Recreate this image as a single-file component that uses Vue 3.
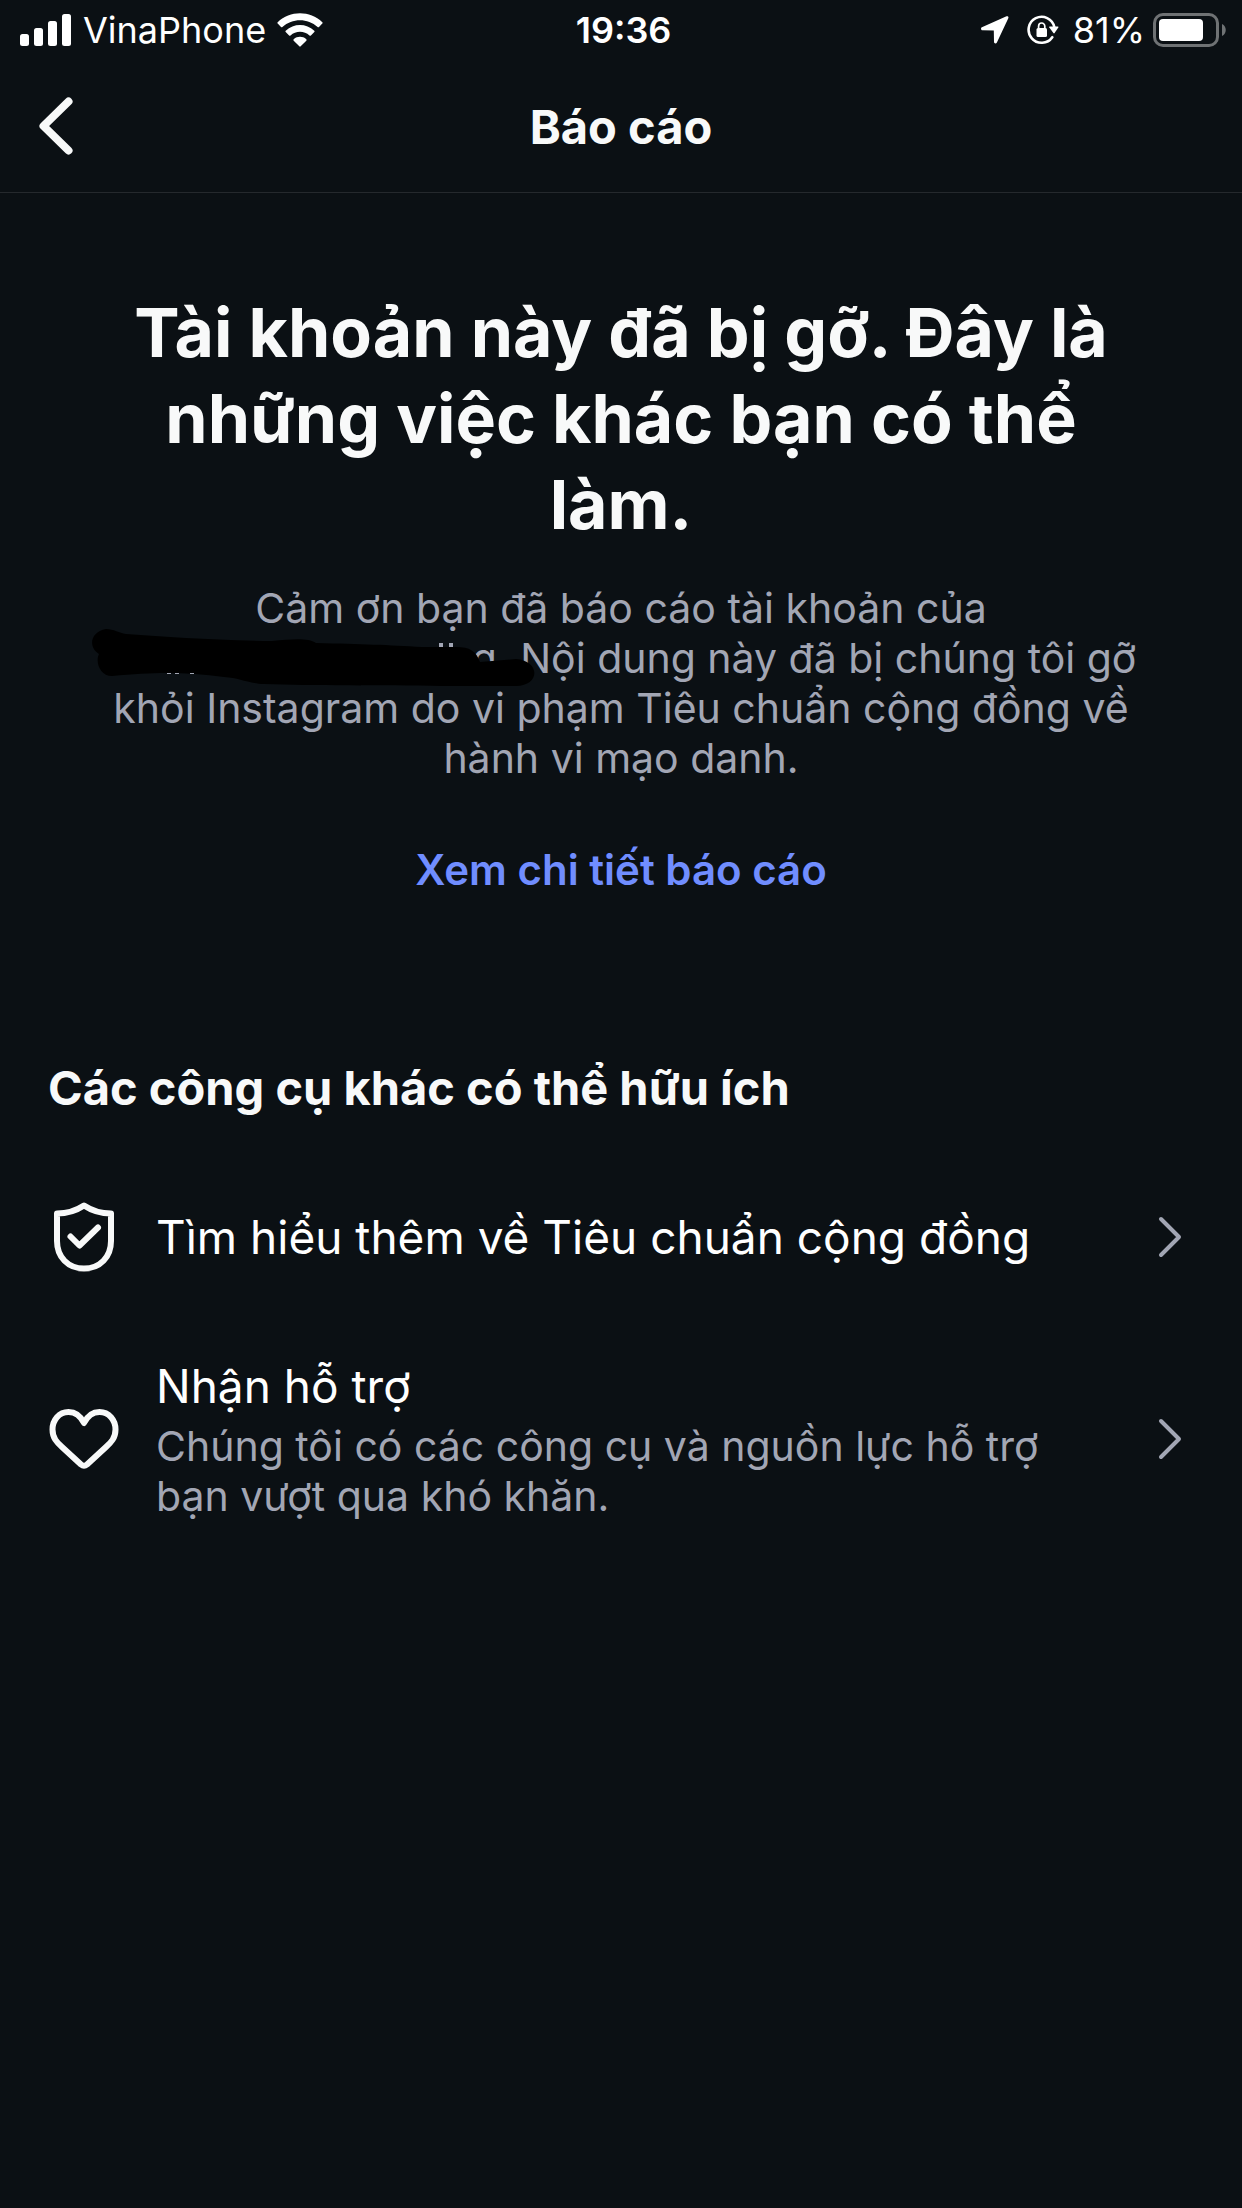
<template>
  <div class="screen">
    <div class="status-bar">
      <div class="status-left">
        <svg class="icon-signal" viewBox="0 0 52 33" aria-hidden="true">
          <rect x="0" y="20" width="9" height="12" rx="2.5" />
          <rect x="14" y="14" width="9" height="18" rx="2.5" />
          <rect x="28" y="7" width="9" height="25" rx="2.5" />
          <rect x="42" y="0" width="9" height="32" rx="2.5" />
        </svg>
        <span>VinaPhone</span>
        <svg class="icon-wifi" viewBox="0 0 46 34" aria-hidden="true">
          <path d="M.7 9.2C13 -2.6 33 -2.6 45.3 9.2q.7.7 0 1.400l-3.300 3.400q-.7.7-1.400 0C30.800 4.900 15.200 4.900 5.400 14q-.7.7-1.400 0L.7 10.600q-.7-.7 0-1.400z" />
          <path d="M8.700 17.700C16.800 10 29.200 10 37.300 17.700q.7.7 0 1.400l-3.400 3.400q-.7.7-1.400 0C27.200 17.600 18.800 17.600 13.500 22.500q-.7.7-1.400 0l-3.400-3.400q-.7-.7 0-1.400z" />
          <path d="M16.700 26.200c3.600-3.200 9-3.200 12.600 0q.8.7 0 1.500l-5.600 5.600q-.7.7-1.400 0l-5.600-5.600q-.8-.8 0-1.500z" />
        </svg>
      </div>
      <span class="clock">19:36</span>
      <div class="status-right">
        <svg class="icon-location" viewBox="0 0 28 28" aria-hidden="true">
          <path d="M25.500.3.900 11.300c-1.500.7-1 3 .6 3l11.300.2.200 11.500c0 1.600 2.200 2 2.900.5L27.300 2.200c.6-1.300-.5-2.400-1.800-1.900z" />
        </svg>
        <svg class="icon-lock" viewBox="0 0 32 30" aria-hidden="true">
          <path d="M25.300 22.200A13 13 0 1 1 27.300 12" fill="none" stroke="#fff" stroke-width="2.600" stroke-linecap="round" />
          <path d="M22.800 11.500h8q1 0 .5 1l-3.700 5.600q-.6.8-1.200 0l-4.100-5.600q-.5-1 .5-1z" />
          <rect x="9.500" y="13" width="10.500" height="9" rx="1.500" />
          <path d="M11.600 13.500v-2.200a3.100 3.300 0 0 1 6.200 0v2.200" fill="none" stroke="#fff" stroke-width="1.700" />
        </svg>
        <span>81%</span>
        <svg class="icon-battery" viewBox="0 0 74 34" aria-hidden="true">
          <rect x="1.500" y="1.500" width="63" height="31" rx="8.500" fill="none" stroke="#6f7274" stroke-width="3" />
          <rect x="6" y="6" width="44" height="22" rx="4" />
          <path d="M69 11c5 2 5 10 0 12z" fill="#6f7274" />
        </svg>
      </div>
    </div>

    <header class="nav-bar">
      <button class="back-button" type="button" aria-label="Quay lại">
        <svg viewBox="0 0 34 58" aria-hidden="true">
          <path d="M29.500 4.500 4.500 29 29.500 53.500" />
        </svg>
      </button>
      <div class="nav-title">Báo cáo</div>
    </header>

    <main>
      <section class="summary">
        <h1>Tài khoản này đã bị gỡ. Đây là những việc khác bạn có thể làm.</h1>
        <p>
          Cảm ơn bạn đã báo cáo tài khoản của
          <span class="account"><svg class="scribble" viewBox="0 0 444 58" aria-hidden="true">
              <path d="M14 0C22 0 27 4 34 5C76 8 120 11 180 12C202 10 216 9 224 14C270 15 296 16 330 18H364C378 18 384 22 388 33L424 30C449 32 448 57 424 57H350C290 56 220 57 172 55C154 54 148 49 132 48C94 43 64 43 20 47C8 47 3 33 7 25C-4 18 -2 3 14 0z" />
              <path class="trace" d="M347 14h4v4h-4zM357 14h4v4h-4zM75 44h4v1h-4zM83 44h4v1h-4zM98 44h4v1h-4z" />
            </svg></span>g. Nội dung này đã bị chúng tôi gỡ khỏi Instagram do vi phạm Tiêu chuẩn cộng đồng về hành vi mạo danh.
        </p>
        <a class="details-link" href="#">Xem chi tiết báo cáo</a>
      </section>

      <section class="tools">
        <h2>Các công cụ khác có thể hữu ích</h2>
        <a v-for="tool in tools" :key="tool.title" class="tool" href="#">
          <svg v-if="tool.icon === 'shield'" class="tool-icon" viewBox="0 0 72 72" aria-hidden="true">
            <path d="M36 4.500C28 9.800 19 12.500 9 12.500V40C9 56 20 67.500 36 67.500S63 56 63 40V12.500C53 12.500 44 9.800 36 4.500z" />
            <path d="M22.500 35.500 31.500 44.500 50 26.500" />
          </svg>
          <svg v-else class="tool-icon" viewBox="0 0 72 72" aria-hidden="true">
            <path d="M36 20C32.500 13 27 9 20.500 9C11 9 4.500 17 4.500 26.500C4.500 35 9 39.500 14 44L33 61.500Q36 64 39 61.500L58 44C63 39.500 67.500 35 67.500 26.500C67.500 17 61 9 51.500 9C45 9 39.500 13 36 20z" />
          </svg>
          <span class="tool-text">
            <span class="tool-title">{{ tool.title }}</span>
            <span v-if="tool.description" class="tool-description">{{ tool.description }}</span>
          </span>
          <svg class="chevron" viewBox="0 0 24 42" aria-hidden="true">
            <path d="M3 3 21 21 3 39" />
          </svg>
        </a>
      </section>
    </main>
  </div>
</template>

<script setup>
const tools = [
  {
    icon: "shield",
    title: "Tìm hiểu thêm về Tiêu chuẩn cộng đồng",
  },
  {
    icon: "heart",
    title: "Nhận hỗ trợ",
    description: "Chúng tôi có các công cụ và nguồn lực hỗ trợ bạn vượt qua khó khăn.",
  },
];
</script>

<style>
body {
  margin: 0;
  background: #0b1014;
}
</style>

<style scoped>
.screen {
  min-height: 100vh;
  background: #0b1014;
  color: #f8f9f9;
  font-family: Inter, "Liberation Sans", sans-serif;
}

svg {
  display: block;
  flex-shrink: 0;
}

/* Status bar */
.status-bar {
  display: grid;
  grid-template-columns: 1fr auto 1fr;
  align-items: center;
  height: 60px;
  padding: 0 15px 0 20px;
  color: #fff;
  fill: #fff;
  font-size: 36px;
}

.status-left,
.status-right {
  display: flex;
  align-items: center;
  gap: 11px;
}

.status-right {
  justify-content: flex-end;
  gap: 8px;
}

.clock {
  font-weight: 600;
}

.icon-signal {
  width: 52px;
}

.icon-wifi {
  width: 46px;
}

.icon-location {
  width: 28px;
  margin-right: 10px;
}

.icon-lock {
  width: 32px;
  margin-right: 6px;
}

.icon-battery {
  width: 74px;
}

/* Navigation bar */
.nav-bar {
  display: grid;
  grid-template-columns: 1fr auto 1fr;
  align-items: center;
  height: 132px;
  border-bottom: 1px solid #25292d;
}

.back-button {
  justify-self: start;
  padding: 24px 39px;
  border: none;
  background: none;
  cursor: pointer;
}

.back-button svg {
  width: 34px;
  fill: none;
  stroke: #f8f9f9;
  stroke-width: 8;
  stroke-linecap: round;
  stroke-linejoin: round;
}

.nav-title {
  font-size: 47px;
  font-weight: 700;
}

/* Summary */
.summary {
  padding: 96px 90px 0;
  text-align: center;
}

h1 {
  margin: 0;
  font-size: 68px;
  font-weight: 700;
  line-height: 86px;
}

.summary p {
  margin: 36px 0 62px;
  color: #a2a6b4;
  font-size: 41px;
  line-height: 50px;
}

/* Blacked-out account name, the mark is drawn over the text line */
.account {
  display: inline-block;
  position: relative;
  width: 366px;
}

.scribble {
  position: absolute;
  top: -44px;
  left: -14px;
  width: 444px;
}

.scribble .trace {
  fill: #a2a6b4;
}

.details-link {
  display: inline-block;
  color: #708dff;
  font-size: 42px;
  font-weight: 600;
  line-height: 50px;
  text-decoration: none;
  vertical-align: top;
}

/* Tools */
.tools {
  padding: 164px 48px 0;
}

h2 {
  margin: 0 0 60px;
  font-size: 47px;
  font-weight: 700;
  line-height: 58px;
}

.tool {
  display: flex;
  align-items: center;
  padding: 24px 12px 24px 0;
  color: #fff;
  text-decoration: none;
}

.tool + .tool {
  margin-top: 36px;
}

.tool-icon {
  width: 72px;
  fill: none;
  stroke: #f8f9f9;
  stroke-width: 6;
  stroke-linecap: round;
  stroke-linejoin: round;
}

.tool-text {
  flex: 1;
  padding: 0 90px 0 36px;
}

.tool-title,
.tool-description {
  display: block;
}

.tool-title {
  font-size: 46px;
  line-height: 58px;
}

.tool-description {
  margin-top: 6px;
  color: #a2a6b4;
  font-size: 41px;
  line-height: 50px;
}

.chevron {
  width: 24px;
  fill: none;
  stroke: #a2a6b4;
  stroke-width: 4;
  stroke-linecap: round;
  stroke-linejoin: round;
}
</style>
